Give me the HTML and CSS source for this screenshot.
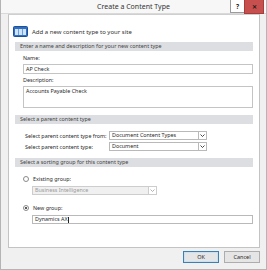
FILE: index.html
```html
<!DOCTYPE html>
<html lang="en">
<head>
  <meta charset="UTF-8">
  <title>Create a Content Type</title>
  <link rel="stylesheet" href="styles.css">
</head>
<body>

  <div class="window">
    <div class="titlebar">
      <span></span>
      <span class="title">Create a Content Type</span>
      <div class="caption-buttons">
        <span class="cap-btn help">?</span>
        <span class="cap-btn close">&#x2715;</span>
      </div>
    </div>

    <div class="client">
      <div class="panel">
        <div class="panel-head">
          <svg class="site-icon" width="15" height="11" viewBox="0 0 15 11">
            <rect x="0.5" y="0.5" width="14" height="10" rx="1" fill="#2f6fc4" stroke="#1f4f96"/>
            <rect x="2" y="3" width="11" height="6" fill="#cfe3fb"/>
            <path d="M5.5 3v6M9.5 3v6" stroke="#6d9fdc" stroke-width="1"/>
          </svg>
          <span>Add a new content type to your site</span>
        </div>

        <div class="section-title">Enter a name and description for your new content type</div>
        <div class="field">
          <div class="label">Name:</div>
          <div class="textbox">AP Check</div>
          <div class="label">Description:</div>
          <div class="textbox multiline">Accounts Payable Check</div>
        </div>

        <div class="section-title gap-lg">Select a parent content type</div>
        <div class="field">
          <div class="select-row first">
            <span class="select-label">Select parent content type from:</span>
            <div class="dropdown">
              <span class="dropdown-text">Document Content Types</span>
              <span class="dropdown-btn"><svg width="5" height="3" viewBox="0 0 5 3"><path d="M0.5 0.5L2.5 2.5L4.5 0.5" fill="none" stroke="#333" stroke-width="0.9"/></svg></span>
            </div>
          </div>
          <div class="select-row">
            <span class="select-label">Select parent content type:</span>
            <div class="dropdown">
              <span class="dropdown-text">Document</span>
              <span class="dropdown-btn"><svg width="5" height="3" viewBox="0 0 5 3"><path d="M0.5 0.5L2.5 2.5L4.5 0.5" fill="none" stroke="#333" stroke-width="0.9"/></svg></span>
            </div>
          </div>
        </div>

        <div class="section-title gap-lg">Select a sorting group for this content type</div>
        <div class="field">
          <div class="radio-row first">
            <span class="radio"></span>
            <span>Existing group:</span>
          </div>
          <div class="group-select">
            <div class="dropdown disabled">
              <span class="dropdown-text">Business Intelligence</span>
              <span class="dropdown-btn"><svg width="5" height="3" viewBox="0 0 5 3"><path d="M0.5 0.5L2.5 2.5L4.5 0.5" fill="none" stroke="#aaa" stroke-width="0.9"/></svg></span>
            </div>
          </div>
          <div class="radio-row second">
            <span class="radio checked"></span>
            <span>New group:</span>
          </div>
          <div class="textbox group-name">Dynamics AX<span class="caret"></span></div>
        </div>
      </div>

      <div class="footer">
        <span class="push-btn default">OK</span>
        <span class="push-btn">Cancel</span>
      </div>
    </div>
  </div>

</body>
</html>
```

FILE: styles.css
```css
/* Basic reset */
* {
  box-sizing: border-box;
  margin: 0;
  padding: 0;
}

body {
  font-family: 'Noto Sans', 'Liberation Sans', sans-serif;
  font-size: 5.4px;
  color: #2a2a2a;
  background-color: #f0f0f0;
}

.window {
  width: 267px;
  height: 270px;
  border: 1px solid #b4b4b4;
  border-top: none;
  background-color: #f0f0f0;
}

/* Title bar */
.titlebar {
  height: 14px;
  display: grid;
  grid-template-columns: 1fr auto 1fr;
  align-items: start;
  background-color: #f7f7f7;
  border-bottom: 1px solid #d9d9d9;
}

.title {
  font-size: 7px;
  line-height: 13px;
  color: #333;
}

.caption-buttons {
  display: flex;
  justify-content: flex-end;
  padding-right: 2px;
}

.cap-btn {
  height: 13px;
  display: flex;
  align-items: center;
  justify-content: center;
  font-weight: 700;
  color: #222;
}

.help {
  width: 14px;
  background-color: #fff;
  border: 1px solid #9c9c9c;
  border-top: none;
  border-right: none;
  font-size: 6.5px;
}

.close {
  width: 20px;
  height: 14px;
  background-color: #c7504f;
  border: 1px solid #a53d3c;
  border-top: none;
  font-size: 5.5px;
  color: #1a1a1a;
}

/* Client area */
.client {
  padding: 0 6px 0 7px;
}

.panel {
  height: 234px;
  background-color: #fff;
  border: 1px solid #c3c3c3;
  border-top-color: #cfcfcf;
  padding: 0 6px;
}

.panel-head {
  display: flex;
  align-items: center;
  gap: 4px;
  height: 11px;
  margin-top: 11px;
  margin-left: -2px;
  font-size: 6px;
  color: #333;
}

.section-title {
  height: 9px;
  margin-top: 5px;
  padding-left: 5px;
  line-height: 9px;
  background-color: #dcdee1;
  color: #444;
  white-space: nowrap;
}

.section-title.gap-lg {
  margin-top: 7px;
}

.field {
  padding-left: 8px;
}

.label {
  height: 7px;
  line-height: 7px;
  margin-top: 4px;
  margin-bottom: 2px;
}

.label + .textbox + .label {
  margin-top: 3px;
}

.textbox {
  height: 10px;
  line-height: 8px;
  padding: 0 2px;
  border: 1px solid #c4c4c4;
  background-color: #fff;
  white-space: nowrap;
}

.textbox.multiline {
  height: 22px;
}

.group-name {
  height: 9px;
  line-height: 7px;
  margin-top: 4px;
  margin-left: 9px;
  border-color: #b9b9b9;
}

.caret {
  display: inline-block;
  width: 1px;
  height: 6px;
  vertical-align: middle;
  background-color: #222;
}

/* Dropdowns */
.select-row {
  display: flex;
  align-items: center;
  margin-top: 2px;
}

.select-row.first {
  margin-top: 7px;
}

.select-label {
  width: 86px;
  padding-left: 2px;
  white-space: nowrap;
}

.dropdown {
  display: flex;
  flex: none;
  width: 98px;
  height: 9px;
  border: 1px solid #b9b9b9;
  background-color: #fff;
}

.dropdown-text {
  flex: 1;
  min-width: 0;
  overflow: hidden;
  padding-left: 2px;
  line-height: 7px;
  white-space: nowrap;
}

.dropdown-btn {
  width: 8px;
  display: flex;
  align-items: center;
  justify-content: center;
  border-left: 1px solid #b9b9b9;
}

.group-select {
  display: flex;
  margin-top: 4px;
  padding-left: 9px;
}

.dropdown.disabled {
  width: 125px;
  background-color: #f0f0f0;
  border-color: #cdcdcd;
  color: #9a9a9a;
}

.dropdown.disabled .dropdown-btn {
  background-color: #fff;
  border-left-color: #cdcdcd;
}

/* Radio buttons */
.radio-row {
  display: flex;
  align-items: center;
  gap: 4px;
  height: 7px;
}

.radio-row.first {
  margin-top: 8px;
}

.radio-row.second {
  margin-top: 9px;
}

.radio {
  width: 6px;
  height: 6px;
  border-radius: 50%;
  border: 1px solid #8a8a8a;
  background-color: #fff;
  display: flex;
  align-items: center;
  justify-content: center;
}

.radio.checked::after {
  content: "";
  width: 2px;
  height: 2px;
  border-radius: 50%;
  background-color: #222;
}

/* Footer buttons */
.footer {
  display: flex;
  justify-content: flex-end;
  gap: 5px;
  margin-top: 3px;
}

.push-btn {
  width: 36px;
  height: 12px;
  display: flex;
  align-items: center;
  justify-content: center;
  border: 1px solid #adadad;
  background-color: #e5e5e5;
  font-size: 5.5px;
}

.push-btn.default {
  border-color: #3c7fb1;
  box-shadow: inset 0 0 0 1px #c8e1f4;
}
```
